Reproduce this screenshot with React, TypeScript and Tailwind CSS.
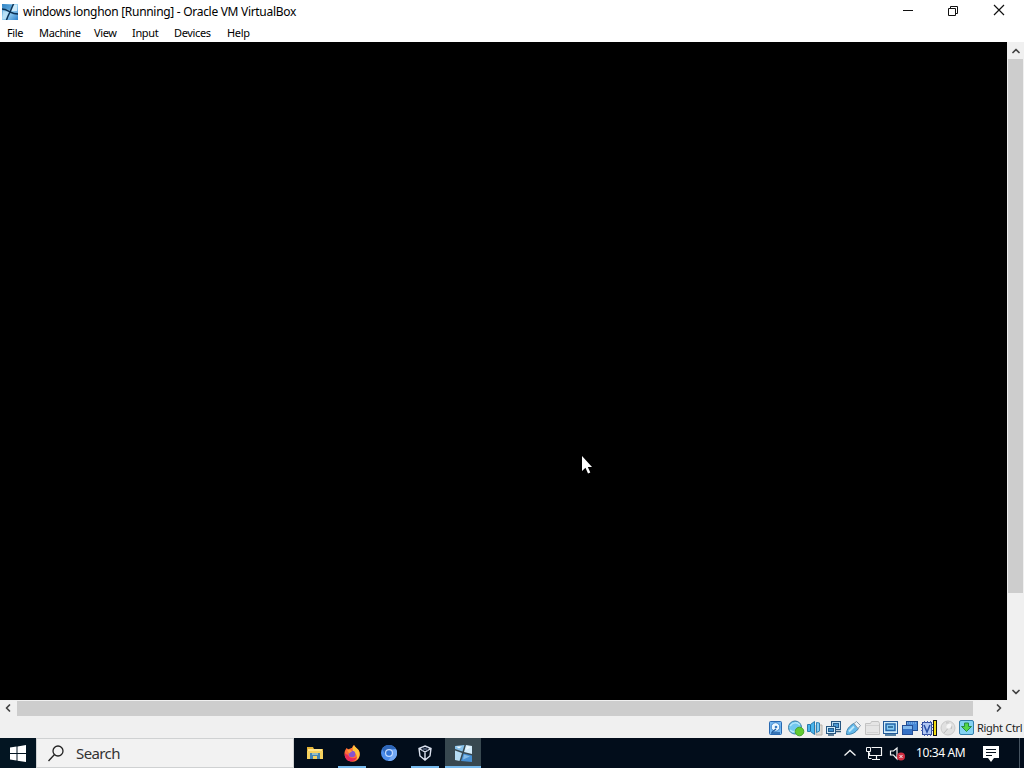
import React from 'react';
import { ChevronDown, ChevronLeft, ChevronRight, ChevronUp } from 'lucide-react';

const menuItems = [
  { label: 'File', width: 'w-8' },
  { label: 'Machine', width: 'w-[55px]' },
  { label: 'View', width: 'w-[38px]' },
  { label: 'Input', width: 'w-[42px]' },
  { label: 'Devices', width: 'w-[53px]' },
  { label: 'Help', width: 'w-10' },
];

function MachineIcon({ size = 16 }: { size?: number }) {
  return (
    <svg width={size} height={size} viewBox="0 0 16 16">
      <defs>
        <linearGradient id="machine" x1="0" y1="0" x2="1" y2="1">
          <stop offset="0" stopColor="#2a7fc2" />
          <stop offset="0.450" stopColor="#a9dcf6" />
          <stop offset="1" stopColor="#2b80cb" />
        </linearGradient>
      </defs>
      <path d="M0 0h16v16H0z" fill="url(#machine)" />
      <path d="M1 1h9L8 6.500 1 4z" fill="#3387ca" opacity=".65" />
      <path d="M12 1h3v6L9.500 7z" fill="#d8f0fb" opacity=".85" />
      <path d="M1 7l5 1-2 7H1z" fill="#c5e7f8" opacity=".7" />
      <path d="M0 5c4 0 6 2 8 3s4 2 8 2M11.500 0C10 3 9 6 8 8s-2.500 5-3.500 8" stroke="#0b3154" strokeWidth="1.500" fill="none" />
    </svg>
  );
}

// Same logo, lighter panes, as it sits on the dark taskbar
function MachineTaskIcon() {
  return (
    <svg width="17" height="17" viewBox="0 0 17 17">
      <path d="M0 1l9.500-1L7.500 6.500 0 4z" fill="#86c0e9" />
      <path d="M11 0l6 1v8L9 7z" fill="#d3ebfa" />
      <path d="M0 5.500L7 8l-2.500 8L0 15z" fill="#b5dbf3" />
      <path d="M8.500 8.500L17 10.500V17l-11-1z" fill="#478fd3" />
      <path d="M1 1.500h6l-3 2zM12 1l4 1-5 3z" fill="#edf8fd" />
      <path d="M9 9.500l6 2-7 3z" fill="#86bce7" />
    </svg>
  );
}

function TitleBar() {
  return (
    <div className="flex h-6 items-center bg-white">
      <div className="ml-0.5 w-[21px]"><MachineIcon /></div>
      <span className="text-[12px] tracking-[-0.3px] text-black">windows longhon [Running] - Oracle VM VirtualBox</span>
      <svg className="mb-0.5 ml-auto mr-[18px]" width="104" height="14" viewBox="0 0 104 14" fill="none" stroke="#111" strokeWidth="1">
        <path d="M1 6.500h10M46.500 4.500h7v7h-7zM48.500 4.500v-2h7v7h-2" />
        <path d="M92 1l10 10M102 1L92 11" strokeWidth="1.200" />
      </svg>
    </div>
  );
}

function MenuBar() {
  return (
    <div className="flex h-[18px] items-center bg-white pl-[7px] text-[11px] tracking-[-0.35px] text-black">
      {menuItems.map((item) => (
        <span key={item.label} className={`${item.width} whitespace-nowrap`}>{item.label}</span>
      ))}
    </div>
  );
}

function Pointer() {
  return (
    <svg className="absolute left-[581px] top-[413px]" width="12" height="20" viewBox="0 0 12 20">
      <path d="M1 1v15l3.500-3.300L7 18.500l2.300-1-2.500-5.500H11z" fill="#fff" />
    </svg>
  );
}

function VerticalScroll() {
  return (
    <div className="flex w-[17px] flex-col items-center bg-[#f0f0f0] text-[#444]">
      <div className="flex h-[17px] items-center"><ChevronUp size={12} strokeWidth={3.5} /></div>
      <div className="h-[534px] w-[15px] bg-[#cdcdcd]" />
      <div className="mt-auto flex h-[17px] items-center"><ChevronDown size={12} strokeWidth={3.5} /></div>
    </div>
  );
}

function HorizontalScroll() {
  return (
    <div className="flex h-4 items-center bg-[#f0f0f0] text-[#444]">
      <div className="flex w-[17px] justify-center pr-px"><ChevronLeft size={12} strokeWidth={3.5} /></div>
      <div className="mt-px h-[15px] w-[956px] bg-[#cdcdcd]" />
      <div className="ml-[19px] flex w-[14px] justify-center"><ChevronRight size={12} strokeWidth={3.5} /></div>
    </div>
  );
}

// Device indicators, 16px each on a 19px pitch
function StatusIcons() {
  return (
    <svg className="mt-1" width="208" height="18" viewBox="0 0 208 18" fill="none">
      {/* hard disk */}
      <rect x="1.500" y="1.500" width="12" height="13" rx="1" fill="#76b9f2" stroke="#2868b0" />
      <circle cx="7.500" cy="7" r="4.300" fill="#edf8ff" stroke="#4386c9" />
      <circle cx="8" cy="7" r="1.300" fill="#397bc0" />
      <path d="M4 12l4-3M3 13h9" stroke="#245ea0" strokeWidth="1.300" />
      {/* optical */}
      <circle cx="27" cy="7.500" r="6.500" fill="#72c8f0" stroke="#367aa7" />
      <path d="M22 6c3-4 7-4 10-1M22 10c2 2 4 2 6 1" stroke="#b4e7fc" strokeWidth="1.500" />
      <circle cx="31.500" cy="11.500" r="4.300" fill="#62cb32" stroke="#46a22d" />
      {/* audio */}
      <path d="M48 5h6v10h-6z" fill="#dedbd5" stroke="#b8b2aa" />
      <path d="M39.500 4.500h3l4-3v13l-4-3h-3z" fill="#4ab5ed" stroke="#2b79ac" />
      <path d="M48.500 2.500v10l3-1.500V3z" fill="#84cdf4" stroke="#2f82b5" />
      <path d="M42.500 5v6" stroke="#246e9e" />
      {/* network */}
      <rect x="63.500" y="1.500" width="9" height="8" fill="#b9def4" stroke="#285680" />
      <rect x="65.500" y="3.500" width="5" height="4" fill="#4b99d2" stroke="#225c90" />
      <rect x="58.500" y="6.500" width="9" height="7" fill="#d0edfb" stroke="#285680" />
      <rect x="60.500" y="8.500" width="5" height="3" fill="#3d8dcb" stroke="#225c90" />
      <path d="M60 15h6M68 11.500h5" stroke="#315879" strokeWidth="1.500" />
      {/* usb */}
      <path d="M78.500 14.500c0-6 3-8 7-11l5 5c-3 4-6 6-12 6z" fill="#64b9ea" stroke="#3b81ab" />
      <path d="M86 3.500l2.500-2 4 4L90 8.500z" fill="#eef4f7" stroke="#8a9baa" />
      <path d="M81 11.500l5-5" stroke="#bce8fb" strokeWidth="2" />
      {/* shared folders */}
      <path d="M97.500 14.500v-11h5l1-2h7l1 2v11z" fill="#e5e5e5" stroke="#c2c2c2" />
      <path d="M98 5.500h13M99 12.500h11" stroke="#d2d2d2" />
      {/* display */}
      <rect x="115.500" y="1.500" width="14" height="12" fill="#d2edfa" stroke="#245a99" />
      <rect x="118" y="4" width="9" height="6.500" fill="#83c8f2" stroke="#2264a9" strokeWidth="1.500" />
      <path d="M120 7h5M117 15h11" stroke="#235b89" strokeWidth="1.300" />
      {/* recording */}
      <rect x="138.500" y="1.500" width="11" height="9" fill="#4788d6" stroke="#204c90" />
      <path d="M139 3h10" stroke="#a1c6ed" strokeDasharray="1 1" />
      <rect x="134.500" y="5.500" width="10" height="9" fill="#82b9ed" stroke="#264f96" />
      <path d="M135 9h9v5h-9z" fill="#3672c5" />
      {/* cpu and its load gauge */}
      <rect x="154.500" y="2.500" width="9" height="12" fill="#b1c7f4" stroke="#304d9e" />
      <path d="M153 4.500h2m-2 3h2m-2 3h2m8-6h2m-2 3h2m-2 3h2M156.500 1v2m3-2v2m3-2v2m-6 11v2m3-2v2m3-2v2" stroke="#4860b1" />
      <path d="M156 5l3 7 3-7" stroke="#284fa5" strokeWidth="1.500" />
      <path d="M165 0h4v16h-4z" fill="#151515" />
      <path d="M166 1h2v14h-2z" fill="#f2dd12" />
      {/* mouse */}
      <circle cx="180" cy="8" r="7" fill="#e0e0e0" stroke="#cacaca" />
      <path d="M176 13l7-8m-5-2c4-1 7 3 5 6" stroke="#bbb" />
      <ellipse cx="181" cy="6" rx="3" ry="2" fill="#f6f6f6" transform="rotate(-45 181 6)" />
      {/* keyboard capture */}
      <rect x="191.500" y=".5" width="14" height="14" rx="1.500" fill="#83d2f3" stroke="#317caa" />
      <path d="M196.500 3h4v3.500h3l-5 5-5-5h3z" fill="#55d748" stroke="#278c44" />
    </svg>
  );
}

function StatusBar() {
  return (
    <div className="flex h-[22px] items-center justify-end bg-[#f0f0f0]">
      <StatusIcons />
      <span className="ml-px mt-0.5 w-[47px] whitespace-nowrap text-[11px] tracking-[-0.3px] text-[#222]">Right Ctrl</span>
    </div>
  );
}

function FolderIcon() {
  return (
    <svg width="16" height="16" viewBox="0 0 16 16">
      <path d="M0 2h6l1 2h9v10H0z" fill="#e6b435" />
      <path d="M1 4h14v9H1z" fill="#ffe38b" />
      <path d="M0 6h16v8H0z" fill="#f5d15e" />
      <path d="M3 8h10v6h-3v-3H6v3H3z" fill="#4385b5" />
      <path d="M5 8h6v2H5z" fill="#92bdc7" />
    </svg>
  );
}

function FirefoxIcon() {
  return (
    <svg width="17" height="17" viewBox="0 0 17 17">
      <path d="M2.500 3l2 1.500C6 3.500 7 3 8 3c0-1 1-2 2-3 .5 2 3 3 4.500 5 3 4 1 11-5.500 11.800C4 17 0 13 .5 8c0-2 1-3 2-5z" fill="#ff6e37" />
      <path d="M10 0c.5 2 3 3 4.500 5 2 4 1 8-2 10 1-4 0-6-3-8C8 5 8.500 2 10 0z" fill="#ffc53b" />
      <path d="M1 8c1 2 2 1 3 2 2 4 6 4 9 2-2 6-11 6-12-1z" fill="#e9295b" />
      <circle cx="8" cy="9" r="3.300" fill="#8654cf" />
      <path d="M3 5c2-1 4 0 5 2-2-.5-2 1-3 1.500z" fill="#ff9a38" />
    </svg>
  );
}

function ChromiumIcon() {
  return (
    <svg width="16" height="16" viewBox="0 0 16 16">
      <circle cx="8" cy="8" r="8" fill="#4c8ded" />
      <path d="M1 4a8 8 0 0 1 14 0H8L5 10z" fill="#2e66b8" />
      <path d="M15 4a8 8 0 0 1-8 12l4-6V5z" fill="#74a9f4" />
      <circle cx="8" cy="8" r="4" fill="#c5dcff" />
      <circle cx="8" cy="8" r="2.800" fill="#3375d7" />
    </svg>
  );
}

function VirtualBoxIcon() {
  return (
    <svg width="14" height="16" viewBox="0 0 14 16" fill="none" stroke="#dbe1ee" strokeWidth="1.400">
      <path d="M7 1l6 2.500L12 11l-5 4-5-4L1 3.500zM1 3.500L7 7l6-3.500M7 7v8" />
      <path d="M4 2.500l6 3M10 2.500l-6 3" stroke="#71809f" strokeWidth=".7" />
    </svg>
  );
}

const taskButtons = [
  { id: 'files', icon: <FolderIcon />, style: 'w-[42px]', line: '' },
  { id: 'firefox', icon: <FirefoxIcon />, style: 'w-8', line: 'w-7 bg-[#76b9ed]' },
  { id: 'chromium', icon: <ChromiumIcon />, style: 'w-[42px]', line: '' },
  { id: 'virtualbox', icon: <VirtualBoxIcon />, style: 'w-[30px]', line: 'w-7 bg-[#76b9ed]' },
  { id: 'machine', icon: <MachineTaskIcon />, style: 'ml-[5px] w-9 bg-[#384850]', line: 'w-9 bg-[#76b9ed]' },
];

function TrayIcons() {
  return (
    <svg width="65" height="22" viewBox="0 0 65 22" fill="none" stroke="#f4f5f6">
      <path d="M1.500 13.500l5.500-5 5.500 5" strokeWidth="1.300" />
      <path d="M28.500 5.500h10v8h-12v-3M33.500 14v3M29 17.500h8" strokeWidth="1.200" />
      <path d="M23.500 5.500h4v4h-4zM25.500 9.500v7h3" />
      <path d="M47.500 9h3l3.500-3v11l-3.500-4h-3z" strokeWidth="1.200" />
      <circle cx="58" cy="14.500" r="4" fill="#cf2f42" stroke="none" />
      <path d="M56.500 13l3 3m0-3l-3 3" />
    </svg>
  );
}

function Taskbar() {
  return (
    <div className="flex h-[30px] bg-[#020d1b] text-white">
      <div className="flex w-9 items-center justify-center bg-[#031522]">
        <svg width="16" height="17" viewBox="0 0 16 17" fill="#fff">
          <path d="M0 2.500l6.500-1V8H0zM7.500 1.400L16 0v8H7.500zM0 9h6.500v6.500L0 14.500zM7.500 9H16v8l-8.500-1.300z" />
        </svg>
      </div>
      <div className="flex w-[258px] items-center border border-[#cfd1d2] bg-[#f2f2f2] text-[#333]">
        <svg className="ml-[11px] mr-3" width="16" height="17" viewBox="0 0 16 17" fill="none" stroke="#222" strokeWidth="1.300">
          <circle cx="10" cy="6" r="5" />
          <path d="M6.500 9.500L.5 16" />
        </svg>
        <span className="text-[15px] tracking-[-0.6px]">Search</span>
      </div>
      {taskButtons.map((button) => (
        <div key={button.id} className={`${button.style} flex flex-col items-center`}>
          <div className="flex h-7 items-center pt-0.5">{button.icon}</div>
          <div className={`${button.line} h-0.5`} />
        </div>
      ))}
      <div className="ml-auto flex items-center">
        <TrayIcons />
        <span className="ml-2 w-[66px] whitespace-nowrap text-[12px] tracking-[-0.4px]">10:34 AM</span>
        <svg className="mt-0.5" width="18" height="18" viewBox="0 0 18 18">
          <path d="M1 1h16v12h-5l-3 4-3-4H1z" fill="#fff" />
          <path d="M4 4.500h10M4 7.500h10M4 10.500h6" stroke="#07121e" />
        </svg>
        <div className="ml-[19px] h-full w-[5px] border-l border-[#475461]" />
      </div>
    </div>
  );
}

export default function App() {
  return (
    <div className="flex h-[768px] w-[1024px] flex-col overflow-hidden font-['Noto_Sans','Open_Sans',sans-serif]">
      <TitleBar />
      <MenuBar />
      <div className="flex h-[658px]">
        <div className="relative w-[1007px] bg-black">
          <Pointer />
        </div>
        <VerticalScroll />
      </div>
      <HorizontalScroll />
      <StatusBar />
      <Taskbar />
    </div>
  );
}
